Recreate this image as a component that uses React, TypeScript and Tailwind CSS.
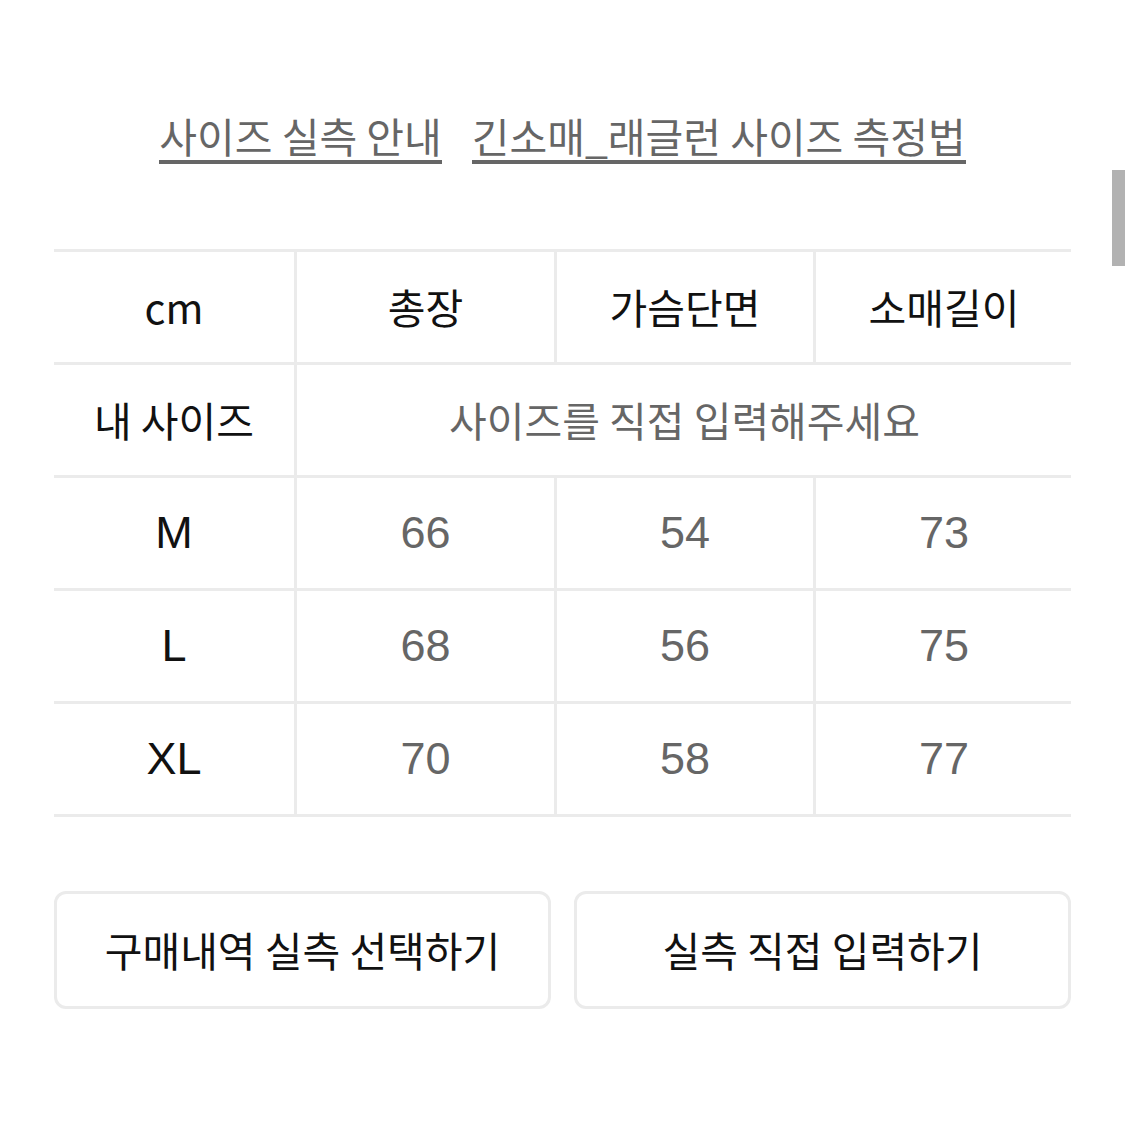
const FONT = { fontFamily: '"Noto Sans CJK KR", "Noto Sans", sans-serif' };

const rows = [
  { size: "M", values: ["66", "54", "73"] },
  { size: "L", values: ["68", "56", "75"] },
  { size: "XL", values: ["70", "58", "77"] },
];

const cols = "grid grid-cols-[240px_260px_259px_259px]";

function Cell({ children, className = "" }: { children: React.ReactNode; className?: string }) {
  return (
    <div className={`flex h-[110px] items-center justify-center border-l-[3px] border-[#ebebeb] first:border-l-0 ${className}`}>
      {children}
    </div>
  );
}

export default function App() {
  return (
    <div className="relative h-[1125px] w-[1125px] bg-white" style={FONT}>
      <div className="absolute right-0 top-[170px] h-[96px] w-[13px] bg-[#b2b2b2]" />

      <div className="flex justify-center gap-[30px] pt-[110px] text-[41px] leading-[50px] text-[#666]">
        <span className="border-b-[4px] border-[#666]">사이즈 실측 안내</span>
        <span className="border-b-[4px] border-[#666]">긴소매_래글런 사이즈 측정법</span>
      </div>

      <div className="mx-[54px] mt-[85px] border-t-[3px] border-[#ebebeb]">
        <div className={`${cols} border-b-[3px] border-[#ebebeb] text-[41px] text-[#111]`}>
          <Cell>cm</Cell>
          <Cell>총장</Cell>
          <Cell>가슴단면</Cell>
          <Cell>소매길이</Cell>
        </div>
        <div className="grid grid-cols-[240px_778px] border-b-[3px] border-[#ebebeb] text-[41px]">
          <Cell className="text-[#111]">내 사이즈</Cell>
          <Cell className="text-[#666]">사이즈를 직접 입력해주세요</Cell>
        </div>
        {rows.map((r) => (
          <div key={r.size} className={`${cols} border-b-[3px] border-[#ebebeb] text-[45px]`} style={{ fontFamily: '"Liberation Sans", Arial, sans-serif' }}>
            <Cell className="text-[#111]">{r.size}</Cell>
            {r.values.map((v, i) => (
              <Cell key={i} className="text-[#666]">{v}</Cell>
            ))}
          </div>
        ))}
      </div>

      <div className="mx-[54px] mt-[74px] grid grid-cols-2 gap-[23px]">
        <button className="h-[118px] rounded-[12px] border-[3px] border-[#ebebeb] text-[41px] text-[#111]">구매내역 실측 선택하기</button>
        <button className="h-[118px] rounded-[12px] border-[3px] border-[#ebebeb] text-[41px] text-[#111]">실측 직접 입력하기</button>
      </div>
    </div>
  );
}
